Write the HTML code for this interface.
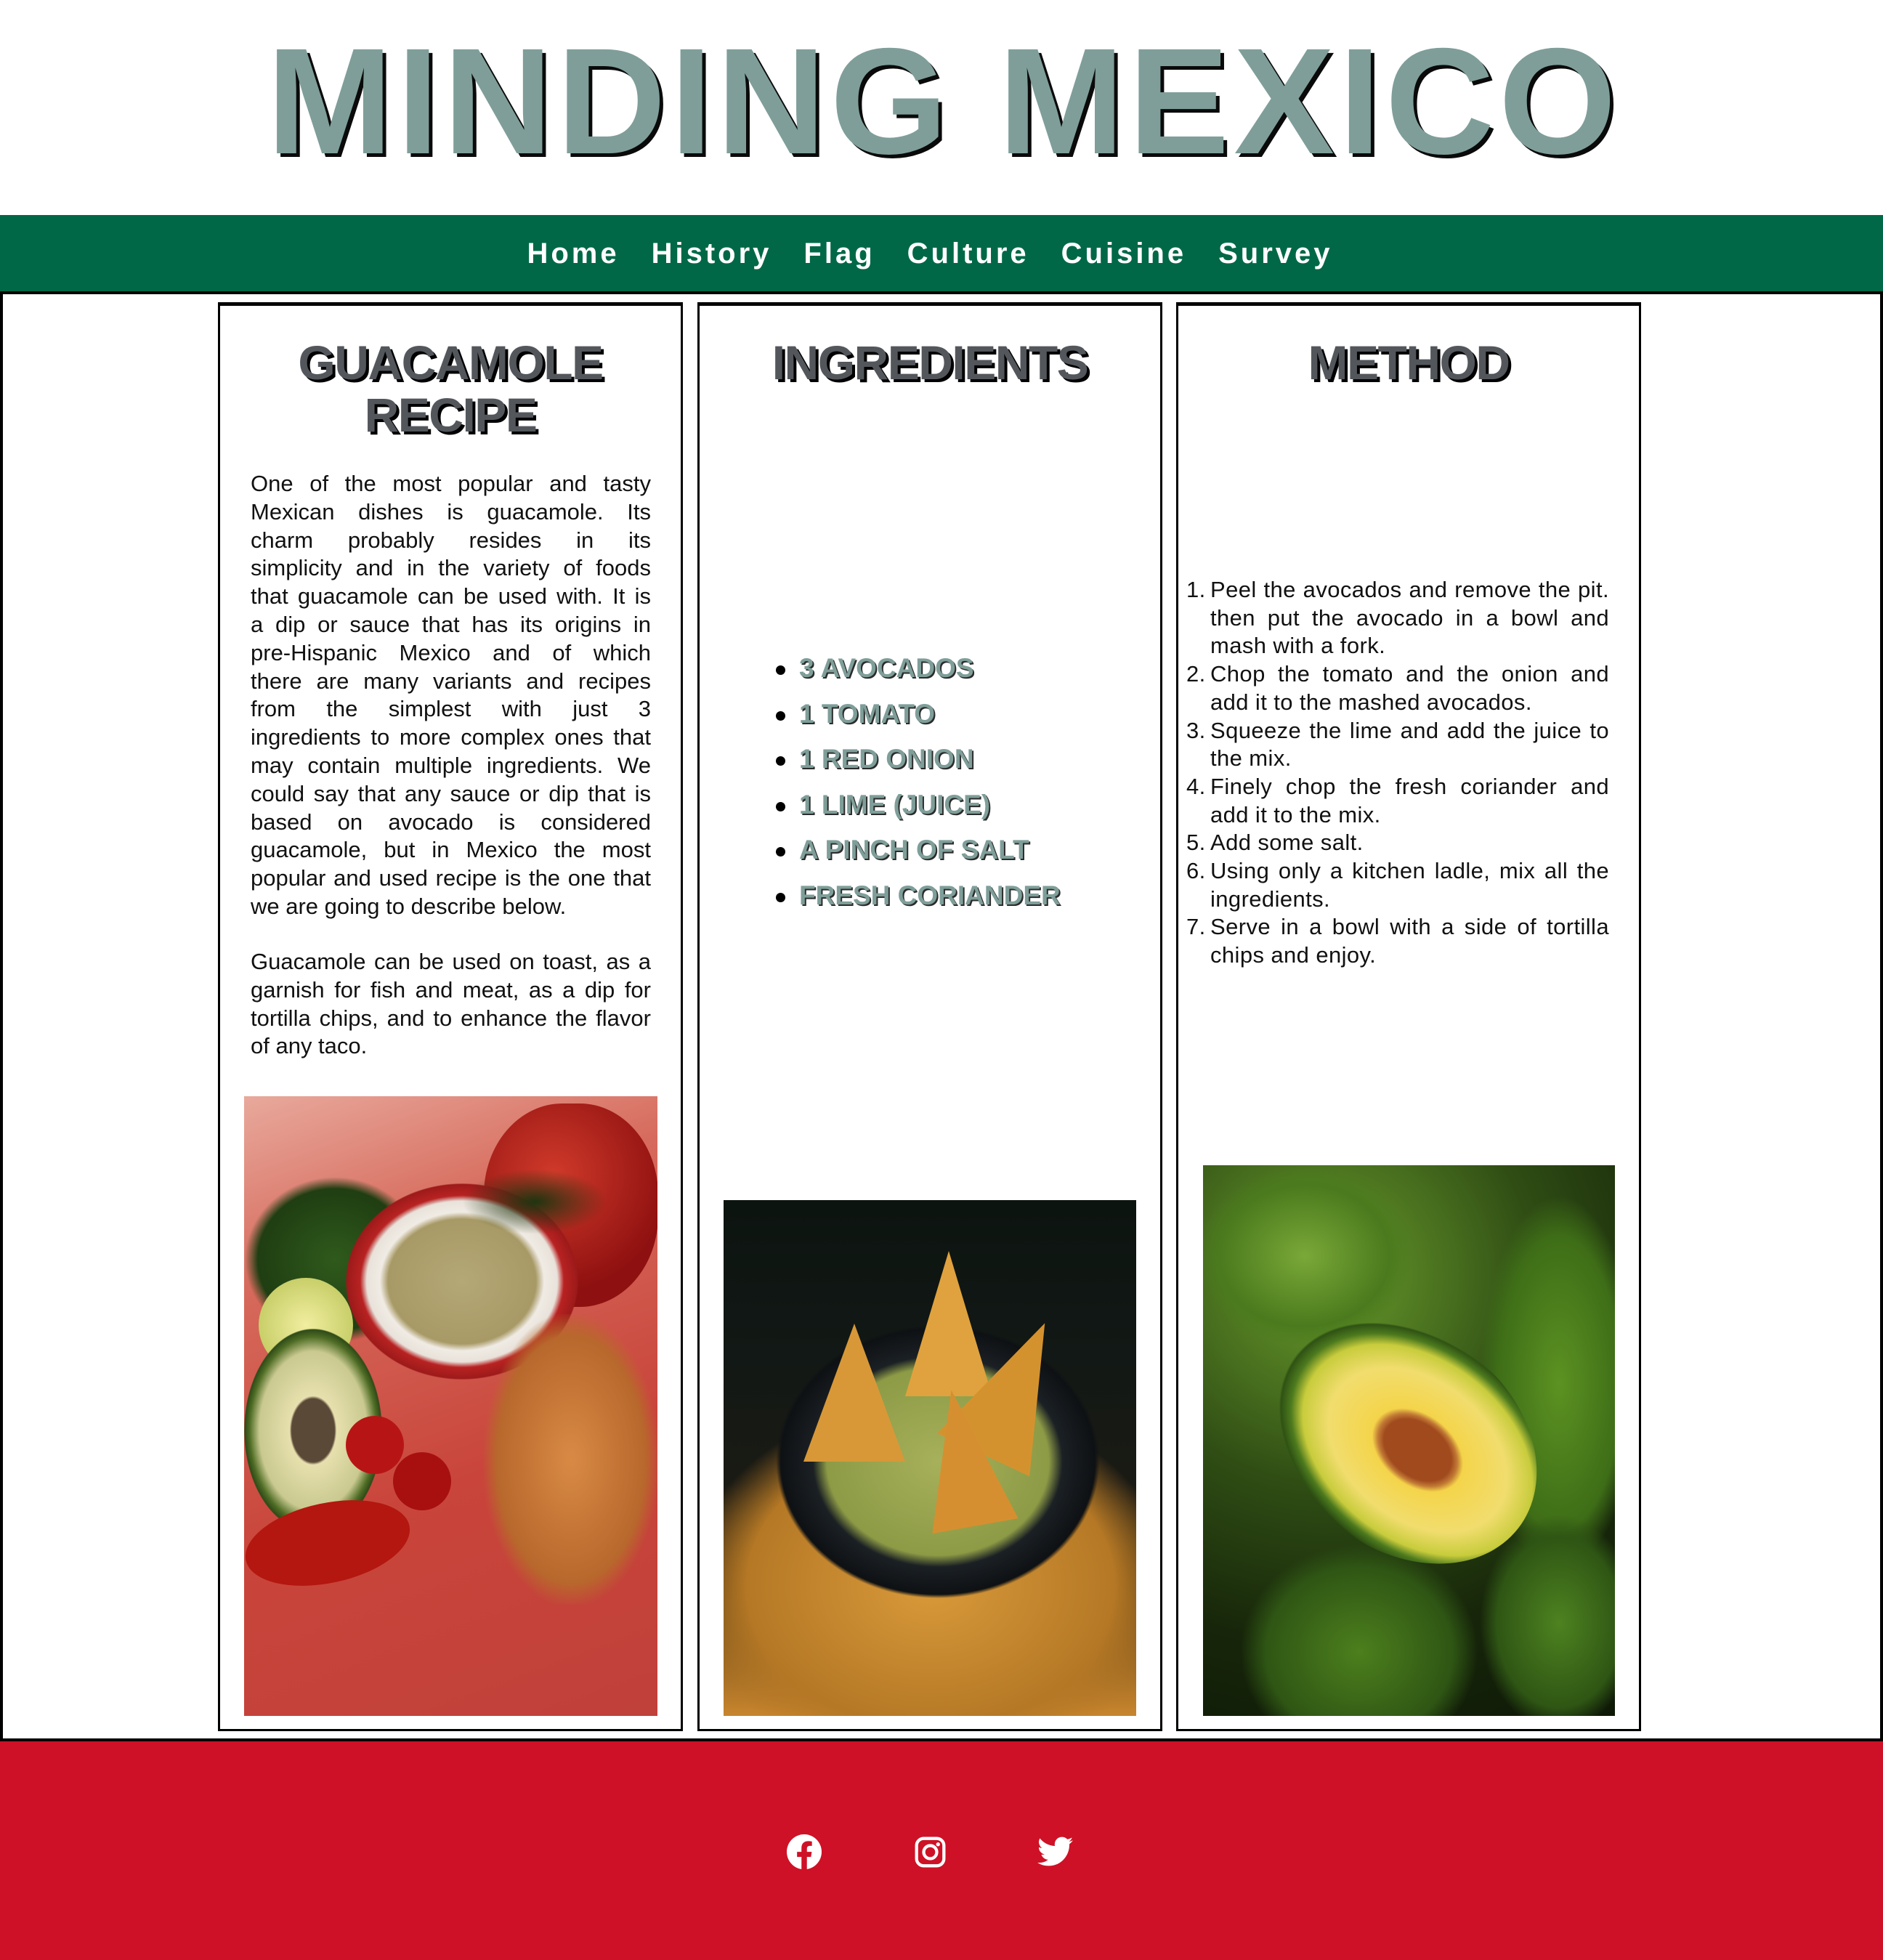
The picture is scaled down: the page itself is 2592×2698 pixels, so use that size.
<!DOCTYPE html>
<html><head><meta charset="utf-8">
<style>
*{margin:0;padding:0;box-sizing:border-box}
html,body{width:2592px;height:2698px;background:#fff;overflow:hidden;font-family:"Liberation Sans",sans-serif}
.abs{position:absolute}
h1{position:absolute;left:0;width:2592px;top:36px;text-align:center;font:bold 208px/1 "Liberation Sans",sans-serif;color:#7f9e99;text-shadow:5px 5px 0 #0a0a0a;letter-spacing:6px;padding-left:6px}
nav{position:absolute;left:0;top:296px;width:2592px;height:106px;background:#006847;text-align:center}
nav span{display:inline-block;color:#fff;font:bold 40px/1 "Liberation Sans",sans-serif;letter-spacing:4px;margin:0 22px;line-height:106px}
nav div{position:relative;left:-16px}
.main{position:absolute;left:0;top:401px;width:2592px;height:1996px;border:4px solid #000}
.col{position:absolute;top:416px;width:640px;height:1967px;border:3px solid #000;border-top-width:5px}
.h2{position:absolute;text-align:center;font:bold 66px/72px "Liberation Sans",sans-serif;color:#53575c;text-shadow:4px 4px 0 #000;letter-spacing:-1.5px}
.p{position:absolute;left:345px;width:551px;font-size:31px;line-height:38.8px;color:#111}
.p div{text-align:justify;text-align-last:justify;white-space:nowrap;height:38.8px}
.p div.l{text-align-last:left}
ul.ing{position:absolute;left:1060px;top:889px;list-style:none}
ul.ing li{font:bold 37px/62.6px "Liberation Sans",sans-serif;color:#7f9e99;text-shadow:2px 2px 0 #2b2b2b;position:relative;padding-left:40px;white-space:nowrap}
ul.ing li:before{content:"";position:absolute;left:8px;top:27px;width:13px;height:13px;border-radius:50%;background:#000}
ol{position:absolute;left:1633px;top:793px;width:582px;list-style:none;font-size:31px;line-height:38.7px;color:#111;letter-spacing:0.4px}
ol li{position:relative;padding-left:33px;text-align:justify}
ol li b{position:absolute;left:0;font-weight:normal}
.img{position:absolute;overflow:hidden}
footer{position:absolute;left:0;top:2397px;width:2592px;height:301px;background:#ce1126}
</style></head><body>
<h1>MINDING MEXICO</h1>
<nav><div><span>Home</span><span>History</span><span>Flag</span><span>Culture</span><span>Cuisine</span><span>Survey</span></div></nav>
<div class="main"></div>
<div class="col" style="left:300px"></div>
<div class="col" style="left:960px"></div>
<div class="col" style="left:1619px"></div>

<div class="h2" style="left:300px;width:640px;top:463px">GUACAMOLE<br>RECIPE</div>
<div class="h2" style="left:960px;width:640px;top:463px">INGREDIENTS</div>
<div class="h2" style="left:1619px;width:640px;top:463px">METHOD</div>

<div class="p" style="top:647px">
<div>One of the most popular and tasty</div>
<div>Mexican dishes is guacamole. Its</div>
<div>charm probably resides in its</div>
<div>simplicity and in the variety of foods</div>
<div>that guacamole can be used with. It is</div>
<div>a dip or sauce that has its origins in</div>
<div>pre-Hispanic Mexico and of which</div>
<div>there are many variants and recipes</div>
<div>from the simplest with just 3</div>
<div>ingredients to more complex ones that</div>
<div>may contain multiple ingredients. We</div>
<div>could say that any sauce or dip that is</div>
<div>based on avocado is considered</div>
<div>guacamole, but in Mexico the most</div>
<div>popular and used recipe is the one that</div>
<div class="l">we are going to describe below.</div>
</div>
<div class="p" style="top:1305px">
<div>Guacamole can be used on toast, as a</div>
<div>garnish for fish and meat, as a dip for</div>
<div>tortilla chips, and to enhance the flavor</div>
<div class="l">of any taco.</div>
</div>

<ul class="ing">
<li>3 AVOCADOS</li><li>1 TOMATO</li><li>1 RED ONION</li><li>1 LIME (JUICE)</li><li>A PINCH OF SALT</li><li>FRESH CORIANDER</li>
</ul>

<ol>
<li><b>1.</b>Peel the avocados and remove the pit. then put the avocado in a bowl and mash with a fork.</li>
<li><b>2.</b>Chop the tomato and the onion and add it to the mashed avocados.</li>
<li><b>3.</b>Squeeze the lime and add the juice to the mix.</li>
<li><b>4.</b>Finely chop the fresh coriander and add it to the mix.</li>
<li><b>5.</b>Add some salt.</li>
<li><b>6.</b>Using only a kitchen ladle, mix all the ingredients.</li>
<li><b>7.</b>Serve in a bowl with a side of tortilla chips and enjoy.</li>
</ol>

<!-- image 1 -->
<div class="img" style="left:336px;top:1509px;width:569px;height:853px;background:linear-gradient(160deg,#e8a99c 0%,#d66a5c 25%,#c9453b 60%,#c0403a 100%)">
 <div class="abs" style="left:330px;top:10px;width:240px;height:280px;border-radius:45%;background:radial-gradient(circle at 40% 35%,#d03a2a,#8e1010 70%)"></div>
 <div class="abs" style="left:0;top:110px;width:250px;height:230px;border-radius:50%;background:radial-gradient(#2f5a1c,#1f3e12 60%,transparent 70%)"></div>
 <div class="abs" style="left:140px;top:120px;width:320px;height:270px;border-radius:50%;background:radial-gradient(#b4a877 0%,#a89a66 45%,#f0ebe4 50%,#e8e2da 58%,#b82222 62%,#9d1a1a 70%,transparent 71%)"></div>
 <div class="abs" style="left:20px;top:250px;width:130px;height:130px;border-radius:50%;background:radial-gradient(#f1eea0,#c9cf6a 70%,#6f8a30 80%,transparent 82%)"></div>
 <div class="abs" style="left:0;top:320px;width:190px;height:280px;border-radius:50%;background:radial-gradient(#5b4938 0 22%,#e7e0ae 24%,#c9c990 55%,#4f6d25 65%,#2f4a18 70%,transparent 71%)"></div>
 <div class="abs" style="left:330px;top:300px;width:240px;height:400px;border-radius:30%;background:radial-gradient(#d88a45,#b8682c 60%,transparent 72%)"></div>
 <div class="abs" style="left:140px;top:440px;width:80px;height:80px;border-radius:50%;background:#b71515"></div>
 <div class="abs" style="left:205px;top:490px;width:80px;height:80px;border-radius:50%;background:#a81010"></div>
 <div class="abs" style="left:0;top:560px;width:230px;height:110px;border-radius:50%;background:#b3170f;transform:rotate(-12deg)"></div>
 <div class="abs" style="left:300px;top:100px;width:200px;height:90px;border-radius:50%;background:radial-gradient(#1f3510,transparent 70%)"></div>
</div>

<!-- image 2 -->
<div class="img" style="left:996px;top:1652px;width:568px;height:710px;background:linear-gradient(180deg,#0c1410 0%,#121815 30%,#1a1a14 55%,#5a3d14 75%,#c8852d 100%)">
 <div class="abs" style="left:-40px;top:280px;width:650px;height:500px;border-radius:40%;background:radial-gradient(#d99a3a,#b57825 55%,transparent 72%)"></div>
 <div class="abs" style="left:70px;top:170px;width:450px;height:380px;border-radius:50%;background:radial-gradient(#a7b05a 0%,#8d9b46 48%,#1b2024 54%,#0e1114 68%,transparent 70%)"></div>
 <div class="abs" style="left:250px;top:70px;width:0;height:0;border-left:60px solid transparent;border-right:60px solid transparent;border-bottom:200px solid #e0a23e"></div>
 <div class="abs" style="left:110px;top:170px;width:0;height:0;border-left:70px solid transparent;border-right:70px solid transparent;border-bottom:190px solid #d89838"></div>
 <div class="abs" style="left:330px;top:160px;width:0;height:0;border-left:70px solid transparent;border-right:70px solid transparent;border-bottom:200px solid #d4922f;transform:rotate(25deg)"></div>
 <div class="abs" style="left:270px;top:260px;width:0;height:0;border-left:60px solid transparent;border-right:60px solid transparent;border-bottom:190px solid #d68f30;transform:rotate(-10deg)"></div>
</div>

<!-- image 3 -->
<div class="img" style="left:1656px;top:1604px;width:567px;height:758px;background:radial-gradient(circle at 30% 20%,#6b9e2c,#2f4d14 40%,#17260a 70%,#0e1807 100%)">
 <div class="abs" style="left:-10px;top:0;width:300px;height:250px;border-radius:50%;background:radial-gradient(#7aa838,#4a7a1d 55%,transparent 70%)"></div>
 <div class="abs" style="left:380px;top:40px;width:220px;height:520px;border-radius:50%;background:radial-gradient(#5c9222,#3e6d17 55%,transparent 70%)"></div>
 <div class="abs" style="left:50px;top:520px;width:330px;height:300px;border-radius:50%;background:radial-gradient(#4c7f1d,#2f5614 55%,transparent 70%)"></div>
 <div class="abs" style="left:380px;top:480px;width:220px;height:300px;border-radius:50%;background:radial-gradient(#4d8220,#2f5614 55%,transparent 70%)"></div>
 <div class="abs" style="left:85px;top:230px;width:390px;height:300px;border-radius:50%;transform:rotate(38deg);background:radial-gradient(ellipse at 55% 50%,#a04a1e 0 17%,#c27a35 20%,#f4d44a 23%,#f1dd6e 45%,#c8cc3c 58%,#4d7a1e 64%,#2f5214 69%,transparent 70%)"></div>
</div>

<footer>
 <svg class="abs" style="left:1083px;top:128px" width="48" height="48" viewBox="0 0 24 24"><path fill="#fff" d="M24 12.07C24 5.41 18.63 0 12 0S0 5.41 0 12.07C0 18.1 4.39 23.1 10.13 24v-8.44H7.08v-3.49h3.04V9.41c0-3.02 1.8-4.7 4.54-4.7 1.31 0 2.68.24 2.68.24v2.97h-1.5c-1.5 0-1.96.93-1.96 1.89v2.26h3.32l-.53 3.5h-2.8V24C19.62 23.1 24 18.1 24 12.07"/></svg>
 <svg class="abs" style="left:1259px;top:131px" width="43" height="43" viewBox="0 0 24 24"><rect x="1.5" y="1.5" width="21" height="21" rx="5.5" fill="none" stroke="#fff" stroke-width="2.4"/><circle cx="12" cy="12" r="5" fill="none" stroke="#fff" stroke-width="2.4"/><circle cx="18" cy="6" r="1.5" fill="#fff"/></svg>
 <svg class="abs" style="left:1428px;top:131px" width="49" height="42" viewBox="0 0 24 20"><path fill="#fff" d="M24 2.37a9.8 9.8 0 0 1-2.83.78A4.93 4.93 0 0 0 23.34.42a9.9 9.9 0 0 1-3.13 1.2A4.92 4.92 0 0 0 11.8 6.1 13.97 13.97 0 0 1 1.67.96a4.92 4.92 0 0 0 1.52 6.57 4.9 4.9 0 0 1-2.23-.62v.06a4.92 4.92 0 0 0 3.95 4.83 4.9 4.9 0 0 1-2.22.08 4.93 4.93 0 0 0 4.6 3.42A9.87 9.87 0 0 1 0 17.33 13.94 13.94 0 0 0 7.550 19.5c9.06 0 14-7.5 14-14l-.01-.64A10 10 0 0 0 24 2.37z"/></svg>
</footer>
</body></html>
